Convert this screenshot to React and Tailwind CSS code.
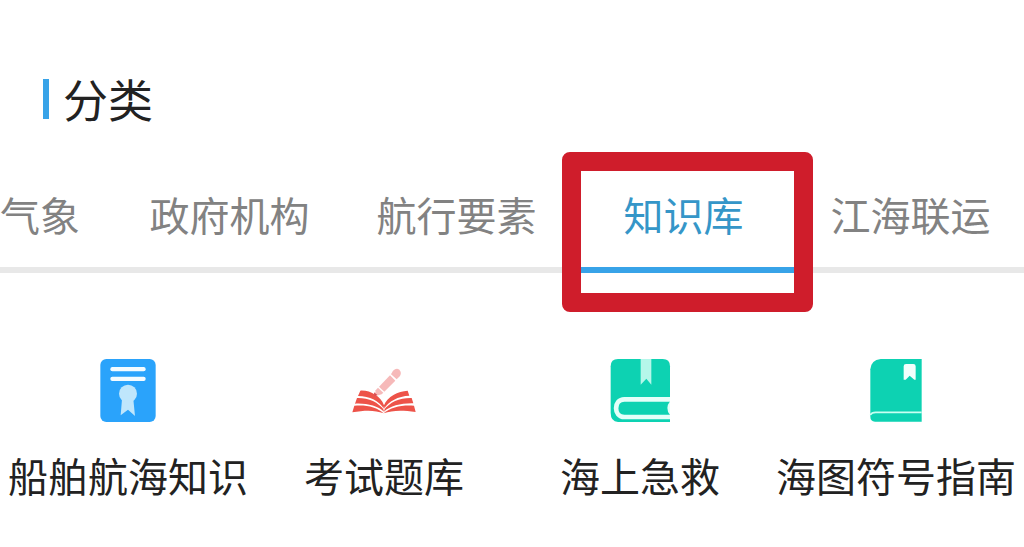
import { useState } from 'react';
import clsx from 'clsx';

const tabs = ['气象', '政府机构', '航行要素', '知识库', '江海联运'];

function CertificateIcon() {
    return (
        <svg viewBox="48 36 192 192" className="size-16" aria-hidden="true">
            <rect x="61" y="39" width="166" height="189" rx="18" fill="#2aa3fb" />
            <rect x="91" y="63" width="106" height="13" rx="6" fill="#f4fbff" />
            <rect x="91" y="92" width="106" height="13" rx="6" fill="#f4fbff" />
            <path d="M126 160 L122 208 L144 191 L165 210 L160 160 Z" fill="#bfe6fc" />
            <circle cx="144" cy="143" r="27" fill="#bfe6fc" />
        </svg>
    );
}

function ExamIcon() {
    return (
        <svg viewBox="51 21 192 192" className="size-16" aria-hidden="true">
            <g fill="#ed5349">
                <path d="M76 119 C106 117 137 136 147 163 C157 136 189 121 218 119 L223 134 C190 135 160 151 147 174 C134 151 104 135 69 135 Z" />
                <path d="M66 141 C99 140 130 153 147 177 C164 153 195 140 230 141 L235 157 C200 156 166 164 147 182 C128 164 94 156 60 158 Z" />
                <path d="M58 164 C95 161 126 168 146 187 C166 168 203 161 237 164 L242 183 C203 177 172 177 146 187 C120 177 91 177 52 184 Z" />
            </g>
            <path d="M147 167 V182" stroke="#fff" strokeWidth="2" />
            <g fill="#f6b9b9">
                <path d="M129 110 L145 125 L140 130 L119 136 L122 118 Z" />
                <path d="M132 107 L165 73 L181 89 L148 122 Z" />
                <path d="M168 70 L174 59 Q184 50 193 56 Q201 64 195 75 L185 85 Z" />
            </g>
            <path d="M117 124 L127 132 L118 137 Z" fill="#d94b50" />
        </svg>
    );
}

function FirstAidBookIcon() {
    return (
        <svg viewBox="54 36 192 192" className="size-16" aria-hidden="true">
            <path
                d="M84 39 H218 Q240 39 240 61 V228 H84 Q62 226 62 200 V61 Q62 39 84 39 Z"
                fill="#0dd2b2"
            />
            <path d="M152 39 H184 V116 L169 98 L152 116 Z" fill="#b5f7ea" />
            <path
                d="M240 160 H103 C70 160 70 213 103 213 H240"
                fill="none"
                stroke="#e4fff9"
                strokeWidth="14"
            />
            <path d="M240 166 Q224 187 240 207 Z" fill="#e4fff9" />
        </svg>
    );
}

function ChartBookIcon() {
    return (
        <svg viewBox="42 36 192 192" className="size-16" aria-hidden="true">
            <path d="M92 39 H215 V227 H75 Q61 226 61 212 V70 Q63 42 92 39 Z" fill="#0dd2b2" />
            <path d="M61 207 Q65 199 77 199 H215" fill="none" stroke="#c9fff2" strokeWidth="5" />
            <path
                d="M161 61 Q161 54 168 54 H190 Q197 54 197 61 V101 H193 L179 89 L167 101 H161 Z"
                fill="#f2fffc"
            />
        </svg>
    );
}

const categories = [
    { name: '船舶航海知识', icon: CertificateIcon },
    { name: '考试题库', icon: ExamIcon },
    { name: '海上急救', icon: FirstAidBookIcon },
    { name: '海图符号指南', icon: ChartBookIcon },
];

export default function App() {
    const [active, setActive] = useState('知识库');

    return (
        <main className="min-h-screen overflow-hidden bg-white pt-[75px] font-['Noto_Sans_CJK_SC',sans-serif] text-[#222222]">
            <header className="flex items-center gap-3.5 pl-[43px]">
                <span className="h-10 w-1.5 bg-[#38a3e8]" />
                <h1 className="text-[45px] leading-12">分类</h1>
            </header>

            <nav className="mt-[67px] grid grid-cols-[1fr_2fr_2fr_2fr_2fr]">
                {tabs.map((tab, index) => (
                    <div key={tab} className="relative">
                        <button
                            type="button"
                            onClick={() => setActive(tab)}
                            className={clsx(
                                'flex w-full border-b-6 pb-[29px] text-[40px] leading-12 whitespace-nowrap',
                                index === 0 ? 'justify-end pr-9' : 'justify-center',
                                tab === active
                                    ? 'border-[#38a3e8] text-[#3596c8]'
                                    : 'border-[#e8e8e8] text-[#828282]',
                            )}
                        >
                            {tab}
                        </button>
                        {tab === '知识库' && (
                            <span className="pointer-events-none absolute -top-[38px] -right-4 -bottom-[39px] -left-2 z-10 rounded-lg border-[19px] border-[#cf1d2b]" />
                        )}
                    </div>
                ))}
            </nav>

            <section className="mt-[85px] grid grid-cols-4">
                {categories.map(({ name, icon: Icon }) => (
                    <a
                        key={name}
                        href="#"
                        className="flex flex-col items-center gap-[29px] text-[40px] leading-12 whitespace-nowrap"
                    >
                        <Icon />
                        <span>{name}</span>
                    </a>
                ))}
            </section>
        </main>
    );
}
